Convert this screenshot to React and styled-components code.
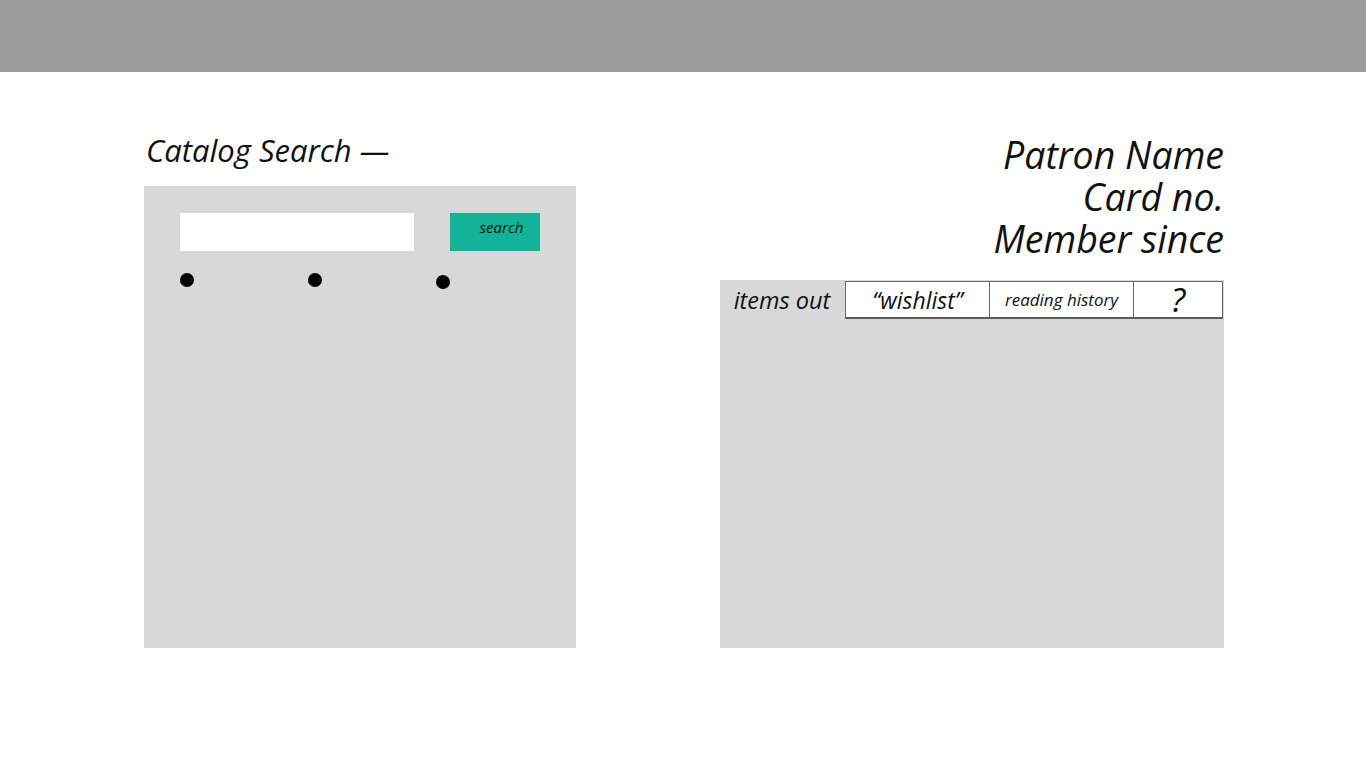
import React from 'react';
import styled, { createGlobalStyle } from 'styled-components';

const GlobalStyle = createGlobalStyle`
    body {
        margin: 0;
        background: #ffffff;
        font-family: "Open Sans", "DejaVu Sans", sans-serif;
        color: #111;
    }
`;

const TopBar = styled.header`
    height: 72px;
    background: #9b9b9b;
`;

const Main = styled.main`
    display: flex;
    justify-content: space-between;
    padding: 58px 142px 0 144px;
`;

const Column = styled.section`
    display: flex;
    flex-direction: column;
    width: ${({ width }) => width}px;
    align-items: ${({ align }) => align || 'flex-start'};
`;

const Title = styled.h2`
    margin: 0 0 16px 2px;
    font-size: 31px;
    line-height: 40px;
    font-weight: 400;
    font-style: italic;
`;

const Panel = styled.div`
    align-self: stretch;
    height: ${({ height }) => height}px;
    background: #d8d8d8;
`;

const SearchPanel = styled(Panel)`
    padding: 27px 36px 0;
    box-sizing: border-box;
`;

const SearchRow = styled.div`
    display: flex;
    gap: 36px;
`;

const SearchInput = styled.input`
    width: 234px;
    height: 38px;
    border: none;
    background: #fff;
    padding: 0 8px;
    box-sizing: border-box;
    outline: none;
`;

const SearchButton = styled.button`
    width: 90px;
    height: 38px;
    border: none;
    background: #14b399;
    font-family: inherit;
    font-style: italic;
    font-size: 15px;
    color: #111;
    padding: 4px 0 0 13px;
    line-height: 20px;
    align-self: flex-start;
    display: flex;
    justify-content: center;
`;

const Dots = styled.div`
    display: flex;
    gap: 114px;
    margin-top: 22px;
`;

const Dot = styled.span`
    width: 14px;
    height: 14px;
    border-radius: 50%;
    background: #000;
    margin-top: ${({ drop }) => drop || 0}px;
`;

const Patron = styled.div`
    margin: 4px 0 20px;
    text-align: right;
    font-size: 37.5px;
    line-height: 42px;
    font-style: italic;
`;

const TabBar = styled.div`
    display: flex;
    height: 40px;
    align-items: stretch;
`;

const TabLabel = styled.div`
    width: 126px;
    display: flex;
    align-items: center;
    justify-content: center;
    font-size: 23.5px;
    font-style: italic;
    padding: 0 2px 1px 0;
    box-sizing: border-box;
`;

const Tab = styled.div`
    width: ${({ width }) => width}px;
    margin: 1px 0 0 -1px;
    height: 38px;
    background: #fff;
    border: 1px solid #6a6a6a;
    border-bottom: 2px solid #5a5a5a;
    box-sizing: border-box;
    display: flex;
    align-items: center;
    justify-content: center;
    font-style: italic;
    font-size: ${({ size }) => size}px;
    &:first-of-type {
        margin-left: 0;
    }
`;

export default function App() {
    return (
        <>
            <GlobalStyle />
            <TopBar />
            <Main>
                <Column width={432}>
                    <Title>Catalog Search —</Title>
                    <SearchPanel height={462}>
                        <SearchRow>
                            <SearchInput />
                            <SearchButton>search</SearchButton>
                        </SearchRow>
                        <Dots>
                            <Dot />
                            <Dot />
                            <Dot drop={2} />
                        </Dots>
                    </SearchPanel>
                </Column>
                <Column width={504} align="flex-end">
                    <Patron>
                        Patron Name
                        <br />
                        Card no.
                        <br />
                        Member since
                    </Patron>
                    <Panel height={368}>
                        <TabBar>
                            <TabLabel>items out</TabLabel>
                            <Tab width={145} size={23}>“wishlist”</Tab>
                            <Tab width={145} size={17}>reading history</Tab>
                            <Tab width={90} size={33}>?</Tab>
                        </TabBar>
                    </Panel>
                </Column>
            </Main>
        </>
    );
}
